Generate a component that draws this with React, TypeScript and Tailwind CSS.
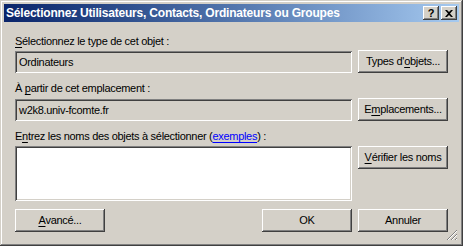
import React from 'react';

const raised =
  'bg-[#d4d0c8] shadow-[inset_-1px_-1px_#404040,inset_1px_1px_#ffffff,inset_-2px_-2px_#808080,inset_2px_2px_#d4d0c8]';
const sunken =
  'shadow-[inset_1px_1px_#808080,inset_-1px_-1px_#ffffff,inset_2px_2px_#404040,inset_-2px_-2px_#d4d0c8]';

function Btn({ children, className = '' }: { children: React.ReactNode; className?: string }) {
  return (
    <button
      type="button"
      className={`${raised} h-[23px] w-[90px] text-[11px] tracking-[-0.3px] leading-none text-black flex items-center justify-center ${className}`}
    >
      {children}
    </button>
  );
}

function U({ children }: { children: React.ReactNode }) {
  return <span className="underline underline-offset-[2px]">{children}</span>;
}

export default function App() {
  return (
    <div
      className="w-[463px] h-[246px] bg-[#d4d0c8] p-[4px] shadow-[inset_-1px_-1px_#404040,inset_1px_1px_#d4d0c8,inset_-2px_-2px_#808080,inset_2px_2px_#ffffff] flex flex-col text-black"
      style={{ fontFamily: '"Liberation Sans", Arial, sans-serif' }}
    >
      {/* title bar */}
      <div className="h-[18px] bg-gradient-to-r from-[#0a246a] to-[#a6caf0] flex items-center pl-[2px] pr-[2px]">
        <span className="text-white font-bold text-[12px] tracking-[-0.2px] flex-1 whitespace-nowrap">
          Sélectionnez Utilisateurs, Contacts, Ordinateurs ou Groupes
        </span>
        <div className={`${raised} w-[16px] h-[14px] flex items-center justify-center text-[11px] font-bold leading-none`}>
          ?
        </div>
        <div className={`${raised} w-[16px] h-[14px] ml-[2px] flex items-center justify-center`}>
          <svg width="8" height="7" viewBox="0 0 8 7">
            <path d="M0 0h2l2 2 2-2h2L5 3.5 8 7H6L4 5 2 7H0l3-3.5z" fill="#000" />
          </svg>
        </div>
      </div>

      <div className="flex-1 relative px-[11px] pt-[13px] text-[11px] tracking-[-0.3px] leading-[13px]">
        <div className="mb-[2px]">
          <U>S</U>électionnez le type de cet objet :
        </div>
        <div className="flex gap-[6px] items-start">
          <div className={`${sunken} bg-[#d4d0c8] w-[337px] h-[22px] mt-[1px] flex items-center px-[4px]`}>
            Ordinateurs
          </div>
          <Btn>
            Types d'<U>o</U>bjets...
          </Btn>
        </div>

        <div className="mt-[9px] mb-[3px]">
          À <U>p</U>artir de cet emplacement :
        </div>
        <div className="flex gap-[6px] items-start">
          <div className={`${sunken} bg-[#d4d0c8] w-[337px] h-[22px] mt-[1px] flex items-center px-[4px]`}>
            w2k8.univ-fcomte.fr
          </div>
          <Btn>
            E<U>m</U>placements...
          </Btn>
        </div>

        <div className="mt-[9px] mb-[3px]">
          E<U>n</U>trez les noms des objets à sélectionner (
          <span className="text-[#0000ff] underline underline-offset-[2px]">exemples</span>) :
        </div>
        <div className="flex gap-[6px] items-start">
          <div className={`${sunken} bg-white w-[337px] h-[55px]`} />
          <Btn>
            <U>V</U>érifier les noms
          </Btn>
        </div>

        <div className="flex gap-[6px] mt-[8px]">
          <Btn>
            <U>A</U>vancé...
          </Btn>
          <div className="flex-1" />
          <Btn>OK</Btn>
          <Btn>Annuler</Btn>
        </div>

        <svg className="absolute right-[1px] bottom-[1px]" width="12" height="12" viewBox="0 0 12 12">
          <path d="M11 1L1 11M11 5L5 11M11 9L9 11" stroke="#808080" strokeWidth="1" />
          <path d="M11 2L2 11M11 6L6 11M11 10L10 11" stroke="#ffffff" strokeWidth="1" />
        </svg>
      </div>
    </div>
  );
}
